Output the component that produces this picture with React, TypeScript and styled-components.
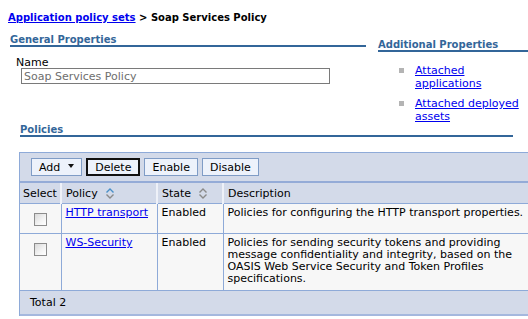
import styled, { createGlobalStyle } from 'styled-components'

const GlobalStyle = createGlobalStyle`
  html, body {
    margin: 0;
    padding: 0;
    background: #fff;
    overflow: hidden;
  }
  body {
    font-family: "DejaVu Sans", Verdana, sans-serif;
    font-size: 11px;
    color: #000;
  }
`

const policies = [
  {
    name: 'HTTP transport',
    state: 'Enabled',
    description: 'Policies for configuring the HTTP transport properties.',
    height: 30,
  },
  {
    name: 'WS-Security',
    state: 'Enabled',
    description:
      'Policies for sending security tokens and providing message confidentiality and integrity, based on the OASIS Web Service Security and Token Profiles specifications.',
    height: 57,
  },
]

function SortIcon({ active }: { active?: boolean }) {
  return (
    <svg width="10" height="13" viewBox="0 0 10 13">
      <path
        d="M1.5 5.5 L5 2 L8.5 5.5"
        fill="none"
        stroke={active ? '#4a90c8' : '#8a8a8a'}
        strokeWidth="1.4"
      />
      <path d="M1.5 7.5 L5 11 L8.5 7.5" fill="none" stroke="#8a8a8a" strokeWidth="1.4" />
    </svg>
  )
}

export default function App() {
  return (
    <Page>
      <GlobalStyle />
      <Breadcrumb>
        <a href="#">Application policy sets</a> &gt; Soap Services Policy
      </Breadcrumb>

      <TopRow>
        <LeftCol>
          <SectionTitle $width={356}>General Properties</SectionTitle>
          <FieldLabel>Name</FieldLabel>
          <NameInput value="Soap Services Policy" readOnly />
        </LeftCol>
        <RightCol>
          <SectionTitle $width={150}>Additional Properties</SectionTitle>
          <LinkList>
            <li>
              <a href="#">Attached applications</a>
            </li>
            <li>
              <a href="#">Attached deployed assets</a>
            </li>
          </LinkList>
        </RightCol>
      </TopRow>

      <PoliciesSection>
        <SectionTitle $width={493}>Policies</SectionTitle>
      </PoliciesSection>

      <TableFrame>
        <Toolbar>
          <ToolButton>
            Add <Caret />
          </ToolButton>
          <ToolButton $focused>Delete</ToolButton>
          <ToolButton>Enable</ToolButton>
          <ToolButton>Disable</ToolButton>
        </Toolbar>
        <Table>
          <colgroup>
            <col style={{ width: 41 }} />
            <col style={{ width: 96 }} />
            <col style={{ width: 66 }} />
            <col />
          </colgroup>
          <thead>
            <tr>
              <HeadCell>Select</HeadCell>
              <HeadCell>
                <HeadInner>
                  Policy <SortIcon active />
                </HeadInner>
              </HeadCell>
              <HeadCell>
                <HeadInner>
                  State <SortIcon />
                </HeadInner>
              </HeadCell>
              <HeadCell>Description</HeadCell>
            </tr>
          </thead>
          <tbody>
            {policies.map((p) => (
              <tr key={p.name} style={{ height: p.height }}>
                <CheckCell>
                  <CheckBox />
                </CheckCell>
                <Cell>
                  <a href="#">{p.name}</a>
                </Cell>
                <Cell>{p.state}</Cell>
                <Cell>{p.description}</Cell>
              </tr>
            ))}
          </tbody>
          <tfoot>
            <tr>
              <FootCell colSpan={4}>Total 2</FootCell>
            </tr>
          </tfoot>
        </Table>
      </TableFrame>
    </Page>
  )
}

const Page = styled.div`
  width: 560px;
  padding-top: 11px;

  a {
    color: #0000ee;
    text-decoration: underline;
  }
`

const Breadcrumb = styled.div`
  padding-left: 8px;
  font-weight: bold;
  font-size: 10px;
  line-height: 13px;
  height: 13px;
`

const TopRow = styled.div`
  display: flex;
  margin-top: 10px;
`

const LeftCol = styled.div`
  width: 368px;
  padding-left: 10px;
`

const RightCol = styled.div`
  padding-top: 5px;
`

const SectionTitle = styled.div<{ $width: number }>`
  width: ${(p) => p.$width}px;
  color: #336699;
  font-weight: bold;
  font-size: 10px;
  line-height: 11px;
  border-bottom: 2px solid #336699;
`

const FieldLabel = styled.div`
  margin-top: 10px;
  padding-left: 6px;
  line-height: 11px;
`

const NameInput = styled.input`
  display: block;
  margin-left: 11px;
  width: 309px;
  height: 16px;
  box-sizing: border-box;
  border: 1px solid #7a7a7a;
  padding: 0 2px;
  font-family: inherit;
  font-size: 11px;
  color: #6e6e6e;
  background: #fff;
  outline: none;
`

const LinkList = styled.ul`
  list-style: none;
  margin: 12px 0 0 0;
  padding: 0 0 0 21px;

  li {
    position: relative;
    padding-left: 16px;
    width: 112px;
    line-height: 13px;
    margin-bottom: 7px;
  }

  li:last-child {
    margin-bottom: 0;
  }

  li::before {
    content: '';
    position: absolute;
    left: 0;
    top: 4px;
    width: 5px;
    height: 5px;
    background: #b4b4b4;
  }
`

const PoliciesSection = styled.div`
  padding-left: 20px;
  margin-top: 1px;
`

const TableFrame = styled.div`
  margin-top: 15px;
  margin-left: 19px;
  border-top: 1px solid #8eaad8;
  border-left: 1px solid #8eaad8;
  width: 518px;
`

const Toolbar = styled.div`
  display: flex;
  align-items: center;
  gap: 4px;
  height: 28px;
  padding-left: 11px;
  background: #d3dae9;
  border-bottom: 2px solid #94abd7;
`

const ToolButton = styled.button<{ $focused?: boolean }>`
  display: flex;
  align-items: center;
  gap: 8px;
  height: 18px;
  box-sizing: border-box;
  padding: 0 7px;
  font-family: inherit;
  font-size: 11px;
  color: #000;
  background: #edf2fb;
  border: ${(p) => (p.$focused ? '2px solid #111' : '1px solid #7f9cc6')};
  border-radius: 0;
`

const Caret = styled.span`
  width: 0;
  height: 0;
  border-left: 3.5px solid transparent;
  border-right: 3.5px solid transparent;
  border-top: 4px solid #111;
  margin-bottom: 3px;
`

const Table = styled.table`
  width: 100%;
  border-collapse: collapse;
  table-layout: fixed;
`

const HeadCell = styled.th`
  height: 20px;
  padding: 0 3px 0 4px;
  text-align: left;
  font-weight: normal;
  background: #d3dae9;
  border-left: 2px solid #eef1f8;
  border-bottom: 1px solid #8eaad8;
  vertical-align: middle;

  &:first-child {
    border-left: none;
    padding-left: 3px;
  }
`

const HeadInner = styled.span`
  display: inline-flex;
  align-items: center;
  gap: 7px;
`

const Cell = styled.td`
  padding: 3px 4px 0 4px;
  vertical-align: top;
  line-height: 12px;
  background: #f7f7f7;
  border: 1px solid #8eaad8;
  border-top: none;
`

const CheckCell = styled(Cell)`
  text-align: center;
  border-left: none;
  padding-top: 9px;
`

const CheckBox = styled.span`
  display: inline-block;
  width: 11px;
  height: 11px;
  border: 1px solid #8c8c8c;
  background: linear-gradient(135deg, #d9d9d9 0%, #f4f4f4 60%, #ffffff 100%);
`

const FootCell = styled.td`
  height: 23px;
  padding: 0 0 0 10px;
  background: #d3dae9;
  border-bottom: 2px solid #a5b8de;
`
